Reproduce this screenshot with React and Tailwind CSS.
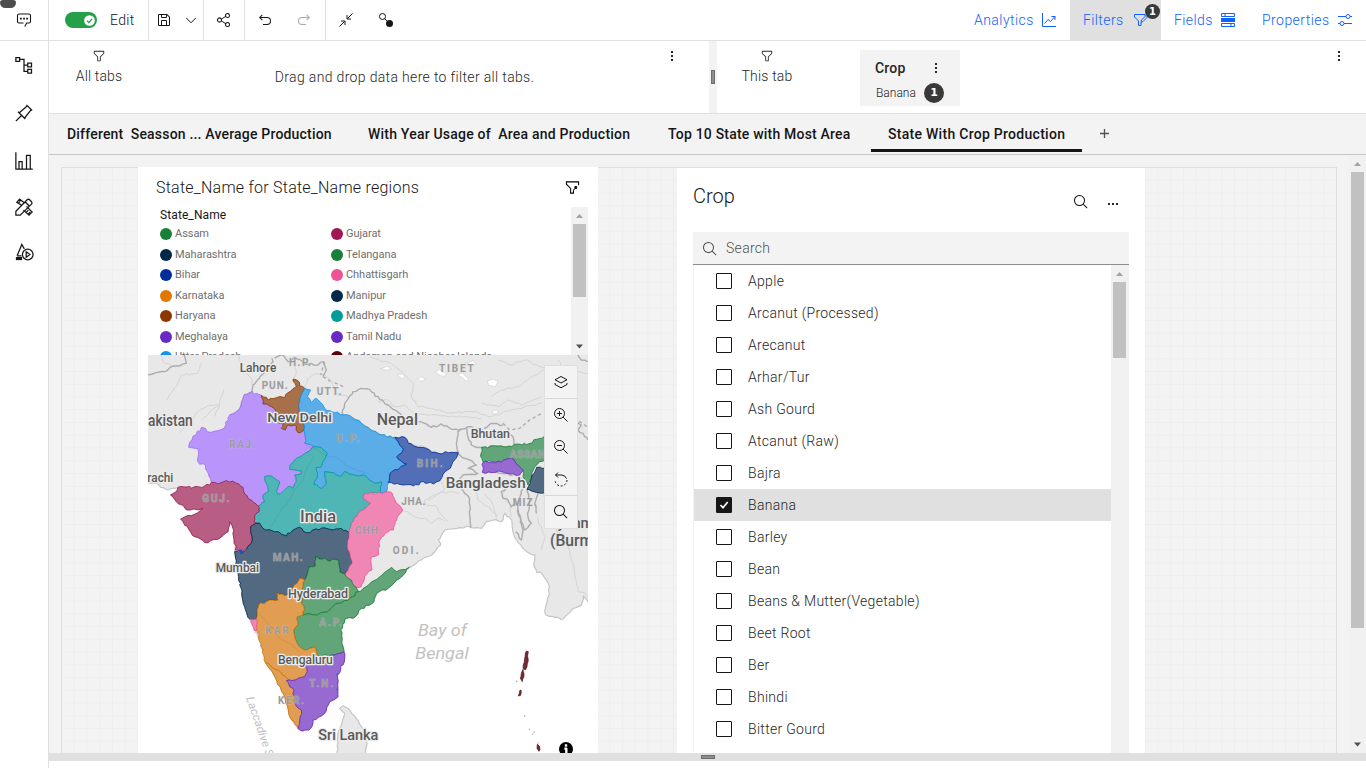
import React from "react";

const SANS = "font-['Roboto','Noto_Sans',sans-serif]";

/* ---------- icons (32 unit grid) ---------- */
function Solid({ d, className = "size-4" }) {
  return (
    <svg viewBox="0 0 32 32" className={`shrink-0 ${className}`} fill="currentColor">
      <path d={d} />
    </svg>
  );
}
function Line({ children, className = "size-4", w = 2 }) {
  return (
    <svg viewBox="0 0 32 32" className={`shrink-0 ${className}`} fill="none" stroke="currentColor" strokeWidth={w}>
      {children}
    </svg>
  );
}
const FILTER = "M18 28H14a2 2 0 0 1-2-2V18.41L4.59 11A2 2 0 0 1 4 9.59V6A2 2 0 0 1 6 4H26a2 2 0 0 1 2 2V9.59A2 2 0 0 1 27.41 11L20 18.41V26A2 2 0 0 1 18 28ZM6 6V9.59l8 8V26h4V17.59l8-8V6Z";
const SEARCH = "M29,27.5859l-7.5521-7.5521a11.0177,11.0177,0,1,0-1.4141,1.4141L27.5859,29ZM4,13a9,9,0,1,1,9,9A9.01,9.01,0,0,1,4,13Z";
const SAVE = "M27.71,9.29l-5-5A1,1,0,0,0,22,4H6A2,2,0,0,0,4,6V26a2,2,0,0,0,2,2H26a2,2,0,0,0,2-2V10A1,1,0,0,0,27.71,9.29ZM12,6h8v4H12Zm8,20H12V18h8Zm2,0V18a2,2,0,0,0-2-2H12a2,2,0,0,0-2,2v8H6V6h4v4a2,2,0,0,0,2,2h8a2,2,0,0,0,2-2V6.41l4,4V26Z";
const SHARE = "M23,20a5,5,0,0,0-3.89,1.89L11.8,17.32a4.46,4.46,0,0,0,0-2.64l7.31-4.57A5,5,0,1,0,18,7a4.79,4.79,0,0,0,.2,1.32l-7.31,4.57a5,5,0,1,0,0,6.22l7.31,4.57A4.79,4.79,0,0,0,18,25a5,5,0,1,0,5-5ZM23,4a3,3,0,1,1-3,3A3,3,0,0,1,23,4ZM7,19a3,3,0,1,1,3-3A3,3,0,0,1,7,19Zm16,9a3,3,0,1,1,3-3A3,3,0,0,1,23,28Z";
const UNDO = "M20,10H7.8149l3.5874-3.5859L10,5,4,11,10,17l1.4023-1.4146L7.8179,12H20a6,6,0,0,1,0,12H12v2h8a8,8,0,0,0,0-16Z";

function Dots({ horizontal }) {
  return (
    <span className={`flex gap-[2px] ${horizontal ? "" : "flex-col"}`}>
      <i className="size-[2px] bg-[#262626]" />
      <i className="size-[2px] bg-[#262626]" />
      <i className="size-[2px] bg-[#262626]" />
    </span>
  );
}

/* ---------- scrollbars ---------- */
function Scrollbar({ className, thumb, down = true }) {
  return (
    <div className={`flex shrink-0 flex-col bg-[#f1f1f1] ${className}`}>
      <svg viewBox="0 0 17 17" className="h-[17px] w-[17px] shrink-0">
        <path d="M5 11h7L8.500 7z" fill="#a3a3a3" />
      </svg>
      <div className={`ml-[2px] w-[13px] bg-[#c1c1c1] ${thumb}`} />
      {down && (
        <svg viewBox="0 0 17 17" className="mt-auto h-[17px] w-[17px] shrink-0">
          <path d="M5 6.500h7L8.500 10.500z" fill="#505050" />
        </svg>
      )}
    </div>
  );
}

/* ---------- top toolbar ---------- */
function Toolbar() {
  return (
    <header className="flex h-[41px] shrink-0 border-b border-[#e0e0e0] bg-white text-[#161616]">
      <div className="relative flex w-[49px] shrink-0 items-center justify-center border-r border-[#e0e0e0]">
        <span className="absolute top-0 left-0 h-2 w-4 rounded-b-lg rounded-t-sm bg-[#4d4d4d]" />
        <Line className="size-4" w={2.2}>
          <path d="M17.500 29l4-7H26a3 3 0 0 0 3-3V7a3 3 0 0 0-3-3H6a3 3 0 0 0-3 3v12a3 3 0 0 0 3 3h9" />
          <path d="M8 13h3.500M14.300 13h3.500M20.500 13H24" strokeWidth="3.500" />
        </Line>
      </div>
      <div className="flex w-[100px] items-center border-r border-[#e0e0e0] pl-4">
        <span className="flex h-4 w-8 items-center justify-end rounded-full bg-[#24a148] pr-[2px]">
          <svg viewBox="0 0 12 12" className="size-[11px]">
            <circle cx="6" cy="6" r="5.800" fill="#fff" />
            <path d="M3.200 6.200l2 2 3.700-4" fill="none" stroke="#24a148" strokeWidth="1.300" />
          </svg>
        </span>
        <span className="ml-[13px] text-[14px] font-light tracking-[0.3px]">Edit</span>
      </div>
      <div className="flex w-[55px] items-center border-r border-[#e0e0e0] pl-[7px]">
        <Solid d={SAVE} />
        <Line className="ml-[11px] size-4" w={2}>
          <path d="M6.500 12L16 21.500 25.500 12" />
        </Line>
      </div>
      <div className="flex w-[41px] items-center justify-center border-r border-[#e0e0e0]">
        <Solid d={SHARE} />
      </div>
      <div className="flex w-[81px] items-center border-r border-[#e0e0e0] pl-3">
        <Solid d={UNDO} />
        <span className="ml-[23px] flex -scale-x-100 text-[#a8a8a8]">
          <Solid d={UNDO} />
        </span>
      </div>
      <div className="flex items-center pl-3">
        <Line className="size-4">
          <path d="M3 29l10-10M29 3L19 13M6 18h8v8M26 14h-8V6" />
        </Line>
        <Line className="ml-6 size-4">
          <circle cx="9" cy="9" r="6" />
          <circle cx="23" cy="23" r="7" fill="currentColor" stroke="none" />
          <path d="M13 13l6 6" />
        </Line>
      </div>
      <nav className="ml-auto flex text-[14px] font-light text-[#0f62fe]">
        <div className="flex w-[110px] items-center pl-[14px]">
          <span className="w-[67px] tracking-[0.45px]">Analytics</span>
          <Line className="size-4">
            <path d="M3 2v27h27M7 23l7-8 5 4 9-10M21 9h7v7" />
          </Line>
        </div>
        <div className="relative flex w-[91px] items-center bg-[#e0e0e0] pl-[13px]">
          <span className="w-[49px] tracking-[0.4px]">Filters</span>
          <Line className="size-4">
            <path d="M26 8V5H5v5l8 8v9h5v-6" />
            <path d="M18 21l1-5L28 7l3 3-9 9z" />
          </Line>
          <span className="absolute top-1 left-[75px] flex size-[15px] items-center justify-center rounded-full bg-[#393939] font-['DejaVu_Sans',sans-serif] text-[10px] font-bold text-white">
            1
          </span>
        </div>
        <div className="flex w-[88px] items-center pl-[13px]">
          <span className="w-[46px] tracking-[0.4px]">Fields</span>
          <Line className="size-4">
            <path d="M3 3h26v6H3zM3 23h26v6H3zM10 3v6M22 23v6" />
            <path d="M2 12h28v8H2z" fill="currentColor" stroke="none" />
          </Line>
        </div>
        <div className="flex w-[117px] items-center pl-[13px]">
          <span className="w-[75px] tracking-[0.45px]">Properties</span>
          <Line className="size-4">
            <path d="M2 9h16M26 9h4M2 23h4M14 23h16" />
            <circle cx="22" cy="9" r="4" />
            <circle cx="10" cy="23" r="4" />
          </Line>
        </div>
      </nav>
    </header>
  );
}

/* ---------- left rail ---------- */
function Rail() {
  return (
    <aside className="flex w-[49px] shrink-0 flex-col items-center border-r border-[#e0e0e0] bg-white pt-[14px] text-[#161616]">
      <Line className="size-5">
        <path d="M3 4h6v6H3zM22 13h6v6h-6zM22 23h6v6h-6zM9 7h7v19h6M16 16h6" />
      </Line>
      <Line className="mt-[28px] size-5">
        <path d="M3 29l9-9M20 3l9 9M21.500 4.500L8.500 15.500M27.500 10.500L17 24M6.500 14l11.500 11.500" />
      </Line>
      <Line className="mt-[28px] size-5">
        <path d="M3 2v27h27M8 29V17h5v12M20 29V7h6v22" />
      </Line>
      <Line className="mt-[26px] size-5">
        <path d="M3 29v-6L21 4.500a3 3 0 0 1 4 0l3 3a3 3 0 0 1 0 4L10 29zM18 8l6 6" />
        <path d="M12 13L4.500 8.500 9 3.500l8 6M7 10l3-3M20 15l9 9-5 5-9-8M23 21l-3 3M26 24l-3 3" />
      </Line>
      <Line className="mt-[25px] size-5">
        <path d="M5 22L12.500 4l4 7M5 22h7" />
        <path d="M3 26.500h10" strokeWidth="5" />
        <circle cx="22" cy="20" r="8.500" />
        <path d="M19.500 15.500l6 4.500-6 4.500z" />
      </Line>
    </aside>
  );
}

/* ---------- filter dock ---------- */
function FilterDock() {
  return (
    <section className="flex h-[73px] shrink-0 border-b border-[#e0e0e0] bg-white text-[14px] font-light text-[#262626]">
      <div className="flex w-[660px]">
        <div className="flex w-[100px] flex-col items-center pt-2">
          <Solid d={FILTER} className="size-[14px]" />
          <span className="mt-[3px] leading-5 tracking-[0.15px]">All tabs</span>
        </div>
        <div className="flex-1 pt-[26px] pr-[11px] text-center leading-5">
          <span className="tracking-[0.34px]">Drag and drop data here to filter all tabs.</span>
        </div>
        <div className="w-[38px] pt-[10px]">
          <Dots />
        </div>
      </div>
      <div className="flex w-2 items-center justify-center bg-[#f3f3f3]">
        <i className="h-[14px] w-1 border border-[#6f6f6f] bg-[#8d8d8d]" />
      </div>
      <div className="flex flex-1">
        <div className="flex w-[100px] flex-col items-center pt-2">
          <Solid d={FILTER} className="size-[14px]" />
          <span className="mt-[3px] leading-5 tracking-[0.2px]">This tab</span>
        </div>
        <div className="mt-[9px] ml-[43px] h-14 w-[100px] bg-[#f3f3f3] pt-2 pl-[15px]">
          <div className="flex items-center">
            <span className="w-[60px] font-medium leading-5 tracking-[0.2px] text-[#262626]">Crop</span>
            <Dots />
          </div>
          <div className="mt-[5px] flex items-center">
            <span className="w-[49px] pl-px text-[12px] leading-5">Banana</span>
            <span className="flex size-5 items-center justify-center rounded-full bg-[#393939] font-['DejaVu_Sans',sans-serif] text-[11px] font-bold text-white">1</span>
          </div>
        </div>
        <div className="mr-[26px] ml-auto pt-[10px]">
          <Dots />
        </div>
      </div>
    </section>
  );
}

function Tabs() {
  return (
    <nav className="flex h-[41px] shrink-0 border-b border-[#c6c6c6] bg-[#f3f3f3] pl-[18px] text-[14px] font-medium leading-10 whitespace-pre text-[#161616]">
      <span className="w-[301px] tracking-[0.19px]">Different  Seasson ... Average Production</span>
      <span className="w-[300px] tracking-[0.21px]">With Year Usage of  Area and Production</span>
      <span className="w-[203px] tracking-[0.2px]">Top 10 State with Most Area</span>
      <span className="mb-[2px] w-[211px] border-b-[3px] border-[#161616] pl-[17px] tracking-[0.28px]">State With Crop Production</span>
      <span className="flex h-[38px] items-center pl-[18px] text-[#525252]">
        <svg viewBox="0 0 9 9" className="size-[9px]">
          <path d="M0 4.500h9M4.500 0v9" stroke="currentColor" strokeWidth="1.300" />
        </svg>
      </span>
    </nav>
  );
}

/* ---------- map ---------- */
const noise = (x, y) => {
  const s = Math.sin(Math.round(x) * 12.9898 + Math.round(y) * 78.233) * 43758.5453;
  return (s - Math.floor(s)) * 2 - 1;
};
/* Turns "x,y x,y ..." into a path with an irregular, coast-like edge. */
function rough(str, closed = true, amp = 3) {
  const p = str.trim().split(/\s+/).map((s) => s.split(",").map(Number));
  let d = `M${p[0][0]} ${p[0][1]}`;
  const n = closed ? p.length : p.length - 1;
  for (let i = 0; i < n; i++) {
    const [x1, y1] = p[i];
    const [x2, y2] = p[(i + 1) % p.length];
    const len = Math.hypot(x2 - x1, y2 - y1);
    const k = Math.max(1, Math.round(len / 9));
    for (let j = 1; j < k; j++) {
      const x = x1 + ((x2 - x1) * j) / k;
      const y = y1 + ((y2 - y1) * j) / k;
      const o = noise(x, y) * amp;
      d += `L${(x + o * 0.7).toFixed(1)} ${(y + noise(y, x) * amp).toFixed(1)}`;
    }
    d += `L${x2} ${y2}`;
  }
  return closed ? d + "Z" : d;
}

const LAND =
  "-12,0 1340,0 1340,755 1320,755 1306,738 1301,765 1276,775 1246,807 1221,802 1194,795 1191,780 1204,730 1201,700 1181,670 1166,668 1158,640 1161,615 1136,605 1106,570 1096,550 1091,510 1071,490 1061,515 1036,510 1016,515 1001,535 966,530 926,535 891,540 871,570 878,585 851,615 826,625 784,652 766,675 726,710 686,730 678,755 640,775 622,800 590,808 578,840 588,905 590,925 568,975 570,1040 545,1055 530,1090 495,1110 488,1135 465,1143 450,1137 425,1100 410,1040 375,970 352,935 330,860 305,807 290,770 270,670 260,605 262,585 255,535 245,515 240,545 215,565 180,578 140,560 98,508 150,488 165,475 120,480 85,455 68,435 85,425 90,412 60,420 38,412 25,400 -12,398";

const REGIONS = [
  ["raj", "#b894fb", "#a371f4", "290,133 313,125 318,132 340,136 345,162 365,168 383,182 385,215 405,220 400,235 412,240 420,225 440,225 450,248 468,240 472,262 470,280 498,290 480,305 445,325 427,345 425,358 460,362 460,372 440,375 445,395 435,415 420,410 405,425 390,432 385,425 395,395 370,378 350,380 355,400 362,425 345,435 350,455 330,468 310,450 290,432 285,412 265,400 235,392 215,400 190,397 187,385 172,345 155,343 148,330 150,297 122,292 125,277 160,232 172,235 178,245 228,235 245,195 272,180"],
  ["har", "#a8704a", "#8a3800", "340,136 360,150 385,143 410,143 420,128 445,110 435,88 450,92 455,108 470,115 460,135 452,165 455,195 468,210 468,240 450,248 440,225 420,225 412,240 400,235 405,220 385,215 383,182 365,168 345,162"],
  ["up", "#5bade7", "#1192e8", "470,115 488,120 478,140 490,158 505,145 530,175 560,188 600,195 625,210 666,238 701,255 741,262 766,298 746,320 776,342 726,370 721,400 716,425 696,428 700,395 680,400 650,375 620,375 590,365 580,378 550,368 530,365 535,400 520,416 498,404 508,375 505,352 520,350 538,310 520,292 498,290 470,280 472,262 468,240 468,210 455,195 452,165 460,135"],
  ["mp", "#50b6b5", "#009d9a", "498,290 480,305 445,325 427,345 425,358 460,362 460,372 440,375 445,395 435,415 420,410 405,425 390,432 385,425 395,395 370,378 350,380 355,400 362,425 345,435 350,455 330,468 333,485 320,495 318,515 335,520 345,535 385,545 415,558 440,538 455,532 475,548 520,535 555,540 580,535 603,548 610,520 625,500 645,480 668,460 645,445 648,432 696,428 700,395 680,400 650,375 620,375 590,365 580,378 550,368 530,365 535,400 520,416 498,404 508,375 505,352 520,350 538,310 520,292"],
  ["guj", "#b85e84", "#9f1853", "190,397 215,400 235,392 265,400 285,412 290,432 310,450 330,468 333,485 320,495 318,515 335,520 308,530 312,560 310,580 295,595 285,608 262,600 262,585 255,535 245,515 240,545 215,565 180,578 140,560 98,508 150,488 165,475 120,480 85,455 68,435 85,425 90,412 150,410 185,405"],
  ["mah", "#526a81", "#012749", "335,520 308,530 312,560 310,580 285,608 260,605 270,670 290,770 305,807 325,807 332,765 355,755 390,750 385,728 420,735 455,685 470,690 485,650 502,648 505,618 520,628 572,632 575,665 590,672 612,640 598,590 603,548 580,535 555,540 520,535 475,548 455,532 440,538 415,558 385,545 345,535"],
  ["chh", "#ef86b4", "#ee5396", "648,432 726,425 741,450 764,480 746,510 736,540 711,550 696,570 691,615 670,620 672,660 650,680 640,710 625,712 610,690 590,675 612,640 598,590 603,548 610,520 625,500 645,480 668,460 645,445"],
  ["tel", "#61a578", "#198038", "505,618 520,628 572,632 575,665 590,672 610,690 625,712 632,725 605,745 570,760 545,780 500,795 465,795 468,770 460,760 465,710 470,690 485,650 502,648"],
  ["ap", "#61a578", "#198038", "632,725 666,700 696,680 731,652 746,665 784,652 766,675 726,710 686,730 678,755 640,775 622,800 590,808 578,840 588,905 550,915 510,918 500,890 470,900 450,885 440,860 437,840 450,825 448,800 465,795 500,795 545,780 570,760 605,745"],
  ["kar", "#e19e52", "#d17200", "455,685 470,690 465,710 460,760 468,770 465,795 448,800 450,825 437,840 440,860 450,885 470,900 500,890 510,918 470,945 478,965 470,980 425,990 385,960 352,938 340,880 325,840 325,807 332,765 355,755 390,750 385,728 420,735"],
  ["goa", "#ef86b4", "#ee5396", "305,807 325,807 327,840 318,842"],
  ["ker", "#e19e52", "#d17200", "352,938 385,960 425,990 415,992 425,1010 435,1015 440,1060 460,1080 455,1120 452,1137 425,1100 410,1040 375,970"],
  ["tn", "#966ad0", "#6929c4", "425,990 470,980 478,965 470,945 500,930 550,915 588,905 590,925 568,975 570,1040 545,1055 530,1090 495,1110 488,1135 465,1143 452,1137 455,1120 460,1080 440,1060 435,1015 425,1010 415,992"],
  ["bih", "#516eb6", "#002d9c", "741,262 771,262 781,280 816,292 871,310 901,308 931,308 924,325 911,345 891,365 876,392 856,402 826,395 796,408 766,405 721,397 726,370 776,342 746,320 766,298"],
  ["assam", "#61a578", "#198038", "1001,292 1066,290 1146,280 1166,268 1200,255 1200,320 1175,335 1158,355 1150,385 1140,405 1125,380 1126,362 1108,345 1090,325 1060,337 1005,335 998,320"],
  ["meg", "#966ad0", "#6929c4", "1005,337 1060,337 1090,325 1108,345 1126,362 1115,375 1060,365 1003,367"],
  ["man", "#526a81", "#012749", "1166,352 1200,352 1200,432 1170,428 1137,418 1150,385"],
];
const ANDAMAN = ["1136,903 1141,905 1140,925 1137,950 1132,960 1125,955 1130,925", "1125,958 1128,972 1123,995 1117,985 1120,970", "1115,1022 1119,1020 1118,1036 1111,1038", "1168,1183 1174,1188 1176,1198 1173,1204 1167,1195"];

/* country borders */
const BORDERS = [
  "-5,73 25,68 50,65 80,48 115,40 108,15",
  "245,195 272,180 290,133 313,125 315,105 345,72 375,35 372,25",
  "380,25 405,15 420,35 440,22 470,42 510,45 525,35 535,60 525,80",
  "582,190 590,160 615,125 640,115 665,118 695,148 720,165 745,182 765,200 800,215 830,220 850,232 880,222 915,238 940,238 960,230 1005,240",
  "582,190 625,210 666,238 701,255 741,262 781,280 816,292 871,310 931,308 925,280 930,245 940,235",
  "955,232 960,262 970,285 1000,292 1066,290 1098,290 1095,260 1070,240",
  "1065,225 1030,220 1008,235",
  "925,310 950,325 965,330 985,345 960,355 990,370 945,375 930,395 950,430 965,450 968,535",
  "1003,367 1060,370 1115,378 1125,395 1120,430 1110,455 1090,470 1080,450 1065,445 1060,425 1075,415",
  "1110,455 1112,490 1125,540 1120,570 1103,545",
  "1137,418 1145,450 1140,500 1150,520 1130,540 1118,510 1108,480",
  "1170,428 1160,460 1165,490",
  "1290,15 1300,30 1320,35",
  "1285,215 1300,225 1290,240 1310,260 1320,270",
];
const STATE_LINES = [
  "55,150 85,110 100,75 150,70 160,40",
  "95,248 130,215 150,185 175,170 215,165 200,200",
  "160,210 215,160 228,118",
  "40,15 45,35 80,48",
  "270,15 280,50 310,85 312,105",
  "435,88 445,70 440,45",
  "470,115 480,85 500,72 530,75 545,85",
  "545,85 560,110 565,130 600,140",
  "690,155 720,150 740,170 770,165 800,190 850,195 900,200 950,200 1000,205",
  "666,20 730,40 770,75 795,100 790,140 810,170 850,175 900,190 980,185 1020,200 1060,190 1110,175 1180,160",
  "1030,140 1060,120 1110,110 1150,80 1190,60",
  "1000,160 1050,170 1080,150 1120,165 1180,140",
  "1050,30 1090,45 1130,30 1190,55",
  "1230,30 1250,60 1320,70",
  "680,250 720,275 760,270 800,285 830,290",
  "876,392 890,420 860,435 830,450 835,465 860,465 885,500 900,515",
  "764,480 800,500 830,505 850,520 870,505 890,512",
  "841,452 870,430 905,425 935,430",
  "985,420 990,450 1020,470 1040,490 1050,500",
  "1010,430 1035,465 1045,505",
  "1075,415 1060,440 1085,460 1090,500",
  "1186,420 1190,470 1210,520 1240,560 1260,590 1275,640 1290,725 1310,728 1320,740",
  "1166,500 1190,560 1180,600",
];

const LABELS = [
  ["Lahore", 275, 67, 110, 36],
  ["akistan", 0, 227, 134, 47],
  ["rachi", -2, 396, 78, 37],
  ["New Delhi", 358, 215, 194, 38],
  ["Nepal", 686, 226, 124, 47],
  ["Bhutan", 968, 265, 118, 37],
  ["Bangladesh", 893, 413, 240, 44],
  ["India", 456, 515, 108, 48],
  ["Mumbai", 203, 667, 130, 37],
  ["Hyderabad", 420, 745, 180, 38],
  ["Bengaluru", 390, 942, 164, 38],
  ["Sri Lanka", 511, 1169, 180, 46],
];
const STATE_LABELS = [
  ["H.P.", 423, 48, 66],
  ["PUN.", 341, 116, 78],
  ["UTT.", 506, 135, 74],
  ["RAJ.", 244, 294, 78],
  ["U.P.", 564, 275, 70],
  ["GUJ.", 163, 456, 82],
  ["TIBET", 873, 66, 104],
  ["ASSAN", 1085, 324, 106],
  ["BIH.", 806, 351, 78],
  ["JHA.", 760, 466, 72],
  ["MIZ.", 1094, 468, 72],
  ["CHH.", 620, 552, 82],
  ["ODI.", 734, 612, 78],
  ["MAH.", 374, 634, 90],
  ["A.P.", 514, 827, 68],
  ["KAR.", 352, 852, 84],
  ["T.N.", 484, 1010, 72],
  ["KER.", 390, 1063, 78],
];

function IndiaMap() {
  return (
    <svg viewBox="0 15 1320 1194" className="block h-[398px] w-[440px]" strokeLinejoin="round" fontFamily="Roboto, 'Noto Sans', sans-serif">
      <path d={rough(LAND, true, 3)} fill="#e8e8e8" stroke="#c4c4c4" strokeWidth="3.500" />
      <path
        d={rough("568,1215 570,1150 582,1120 590,1090 575,1075 585,1067 600,1075 625,1105 650,1145 657,1180 652,1215", true, 2)}
        fill="#e8e8e8"
        stroke="#c4c4c4"
        strokeWidth="3.500"
      />
      <g fill="#fff" stroke="#cfcfcf" strokeWidth="2">
        <path d="M698 55l20-6 12 8-14 4zM748 75l14-4 10 8-10 8zM808 88l12-8 14 8-16 6zM862 68l12-10 22 14-10 8zM928 72l14-4 20 20-6 6zM1018 92l18-4 14 6-8 16-20-4zM1030 185l14-5 10 6-14 6zM955 40l20-8 10 10-12 6z" />
      </g>
      {STATE_LINES.map((s) => (
        <path key={s} d={rough(s, false, 3)} fill="none" stroke="#d4d4d4" strokeWidth="3" />
      ))}
      {BORDERS.map((s) => (
        <path key={s} d={rough(s, false, 3.500)} fill="none" stroke="#adadad" strokeWidth="4.2" />
      ))}
      <path
        d="M530 35l-12 40M525 80l22 14M560 98l30 14M1065 220l20 20 30-5 30-25 40-22M1260 200l30 12 30 20"
        fill="none"
        stroke="#adadad"
        strokeWidth="4.2"
        strokeDasharray="10 8"
      />
      {REGIONS.map(([id, fill, line, pts]) => (
        <path key={id} d={rough(pts, true, 3.800)} fill={fill} stroke={line} strokeWidth="3" strokeOpacity="0.8" />
      ))}
      {ANDAMAN.map((p) => (
        <path key={p} d={rough(p)} fill="#6f2f36" stroke="#520408" strokeWidth="2" />
      ))}
      <g fill="#b5b5b5">
        <path d="M1105 990l5 5-6 2zM1128 1094l6 4-6 3zM1142 1135l5 3-4 4zM1156 1142l5 3-4 6zM1152 1150l4 2-3 4zM1168 1175l5 3-3 5z" />
      </g>
      <g fill="none" stroke="#000" strokeOpacity="0.05" strokeWidth="4">
        <path d={rough("368,530 400,480 425,450 440,420 465,390 478,350 500,318", false, 3)} />
        <path d={rough("475,285 540,318 570,322 600,350 660,370", false, 3)} />
        <path d={rough("335,795 370,830 395,865 425,880 450,905", false, 3)} />
      </g>
      <path d="M270 600l10-2 5 8-8 4z" fill="#1d4fc4" />
      <path d="M564 972l6-2v10zM562 1018l8-3v8z" fill="#1c7f9c" />
      {STATE_LABELS.map(([t, x, y, w]) => (
        <text key={t} x={x} y={y} textLength={w} fontSize="30" fontWeight="700" fill="#9c9c9c" stroke="#d9d9d9" strokeOpacity="0.35" strokeWidth="3" paintOrder="stroke">
          {t}
        </text>
      ))}
      {LABELS.map(([t, x, y, w, size]) => (
        <text key={t} x={x} y={y} textLength={w} lengthAdjust="spacingAndGlyphs" fontSize={size} fontWeight="500" fill="#5a5a5a" stroke="#ececec" strokeWidth="8" paintOrder="stroke">
          {t}
        </text>
      ))}
      <text x="1190" y="535" fontSize="44" fontWeight="500" fill="#5a5a5a">Myanmar</text>
      <text x="1206" y="587" fontSize="47" fontWeight="500" fill="#5a5a5a">(Burma)</text>
      <g fontStyle="italic" fill="#c2c2c2">
        <text x="810" y="858" fontSize="52" textLength="146" lengthAdjust="spacingAndGlyphs">Bay of</text>
        <text x="802" y="928" fontSize="52" textLength="160" lengthAdjust="spacingAndGlyphs">Bengal</text>
        <text transform="translate(294 1044) rotate(71)" fontSize="34" textLength="226" lengthAdjust="spacingAndGlyphs">Laccadive Sea</text>
      </g>
      <circle cx="1254" cy="1197" r="21" fill="#000" />
      <path d="M1254 1183v7M1249 1196h6v14" stroke="#fff" strokeWidth="7" fill="none" />
    </svg>
  );
}

function MapTools() {
  return (
    <div className="absolute top-[10px] left-[396px] w-[34px] border border-[#e0e0e0] bg-[#f3f3f3] text-[#161616]">
      <div className="flex h-[33px] items-center justify-center border-b border-[#d8d8d8]">
        <Line className="size-4">
          <path d="M16 5l12 6.500-12 6.500L4 11.500zM4 18v3l12 6.500L28 21v-3" />
        </Line>
      </div>
      <div className="flex h-8 items-center justify-center">
        <Line>
          <circle cx="13" cy="13" r="10" />
          <path d="M20 20l9 9M13 8v10M8 13h10" />
        </Line>
      </div>
      <div className="flex h-8 items-center justify-center">
        <Line>
          <circle cx="13" cy="13" r="10" />
          <path d="M20 20l9 9M8 13h10" />
        </Line>
      </div>
      <div className="flex h-[33px] items-center justify-center border-b border-[#d8d8d8]">
        <Line>
          <path d="M10 3L5 8l5 5M5 8h12a11 11 0 0 1 10 7" />
          <path d="M28 18a12 12 0 0 1-24 0" strokeDasharray="4 3.500" />
        </Line>
      </div>
      <div className="flex h-8 items-center justify-center">
        <Solid d={SEARCH} />
      </div>
    </div>
  );
}

const LEGEND = [
  ["Assam", "bg-[#198038]", "Gujarat", "bg-[#9f1853]"],
  ["Maharashtra", "bg-[#012749]", "Telangana", "bg-[#198038]"],
  ["Bihar", "bg-[#002d9c]", "Chhattisgarh", "bg-[#ee5396]"],
  ["Karnataka", "bg-[#e07800]", "Manipur", "bg-[#012749]"],
  ["Haryana", "bg-[#8a3800]", "Madhya Pradesh", "bg-[#009d9a]"],
  ["Meghalaya", "bg-[#6929c4]", "Tamil Nadu", "bg-[#6929c4]"],
  ["Uttar Pradesh", "bg-[#1192e8]", "Andaman and Nicobar Islands", "bg-[#520408]"],
];

function MapWidget() {
  return (
    <article className="absolute top-[12px] left-[89px] h-[586px] w-[460px] overflow-hidden bg-white pl-[10px]">
      <div className="flex h-10 items-center justify-between pr-[18px] pl-2">
        <h2 className="pt-[2px] text-[16px] font-light tracking-[0.24px] text-[#161616]">State_Name for State_Name regions</h2>
        <Line className="size-[15px]" w={2.200}>
          <path d="M29 11V4H3v5l9 9v10h6v-6" />
          <circle cx="23" cy="16" r="2" fill="currentColor" />
          <path d="M18 22l3-4" />
        </Line>
      </div>
      <div className="flex h-[148px]">
        <div className="h-full w-[423px] overflow-hidden pl-3">
          <div className="h-[17px] text-[12px] leading-[17px] tracking-[0.1px] text-[#161616]">State_Name</div>
          {LEGEND.map(([a, ca, b, cb]) => (
            <div key={a} className="flex h-[20.5px] items-center text-[11px] leading-4 tracking-[-0.05px] text-[#6f6f6f]">
              <span className="flex w-[171px] items-center gap-[3px]">
                <i className={`size-3 rounded-full ${ca}`} />
                {a}
              </span>
              <span className="flex items-center gap-[3px]">
                <i className={`size-3 rounded-full ${cb}`} />
                {b}
              </span>
            </div>
          ))}
        </div>
        <Scrollbar className="w-[17px]" thumb="h-[73px]" />
      </div>
      <div className="relative">
        <IndiaMap />
        <MapTools />
      </div>
    </article>
  );
}

/* ---------- crop list ---------- */
const CROPS = ["Apple", "Arcanut (Processed)", "Arecanut", "Arhar/Tur", "Ash Gourd", "Atcanut (Raw)", "Bajra", "Banana", "Barley", "Bean", "Beans & Mutter(Vegetable)", "Beet Root", "Ber", "Bhindi", "Bitter Gourd"];

function CropWidget() {
  return (
    <article className="absolute top-[13px] left-[628px] h-[585px] w-[468px] overflow-hidden bg-white pr-4 pl-4">
      <div className="flex h-16 text-[#161616]">
        <h2 className="flex-1 pt-[14px] text-[20px] font-light leading-7">Crop</h2>
        <span className="pt-[26px]">
          <Solid d={SEARCH} />
        </span>
        <span className="pt-[35px] pr-[11px] pl-[19px]">
          <Dots horizontal />
        </span>
      </div>
      <div className="flex h-[33px] items-center border-b border-[#8d8d8d] bg-[#f3f3f3] pt-px pl-[9px] text-[14px] font-light text-[#525252]">
        <Solid d={SEARCH} />
        <span className="ml-2 tracking-[0.3px]">Search</span>
      </div>
      <div className="flex h-[488px] border-l border-[#f3f3f3]">
        <ul className="flex-1 text-[14px] font-light tracking-[0.3px] text-[#262626]">
          {CROPS.map((c) => {
            const on = c === "Banana";
            return (
              <li key={c} className={`flex h-8 items-center pl-[22px] ${on ? "bg-[#e0e0e0]" : ""}`}>
                <span className={`flex size-4 items-center justify-center rounded-[1px] border border-[#161616] ${on ? "bg-[#161616]" : "bg-white"}`}>
                  {on && (
                    <svg viewBox="0 0 10 10" className="size-[10px]">
                      <path d="M1.500 5l2.500 2.700L8.700 2" fill="none" stroke="#fff" strokeWidth="1.700" />
                    </svg>
                  )}
                </span>
                <span className="ml-4">{c}</span>
              </li>
            );
          })}
        </ul>
        <Scrollbar className="w-[18px]" thumb="h-[76px]" down={false} />
      </div>
    </article>
  );
}

export default function App() {
  return (
    <div className={`flex h-[768px] w-[1366px] flex-col overflow-hidden bg-white ${SANS}`}>
      <Toolbar />
      <div className="flex min-h-0 flex-1">
        <Rail />
        <main className="flex min-w-0 flex-1 flex-col">
          <FilterDock />
          <Tabs />
          <div className="flex h-[598px] shrink-0 bg-[#f3f3f3]">
            <div className="relative flex-1 pt-[12px] pr-[12px] pl-[12px]">
              <div className="h-full border border-b-0 border-[#dedede] bg-[linear-gradient(to_right,#eeeeee_1px,transparent_1px),linear-gradient(to_bottom,#eeeeee_1px,transparent_1px)] bg-[size:12.75px_12.75px] bg-[position:-1px_-1px]" />
              <MapWidget />
              <CropWidget />
            </div>
            <Scrollbar className="w-[17px]" thumb="h-[456px] w-[13px]" />
          </div>
          <div className="flex h-2 shrink-0 items-center justify-center bg-[#e0e0e0]">
            <i className="h-1 w-[14px] border border-[#6f6f6f] bg-[#8d8d8d]" />
          </div>
        </main>
      </div>
    </div>
  );
}
